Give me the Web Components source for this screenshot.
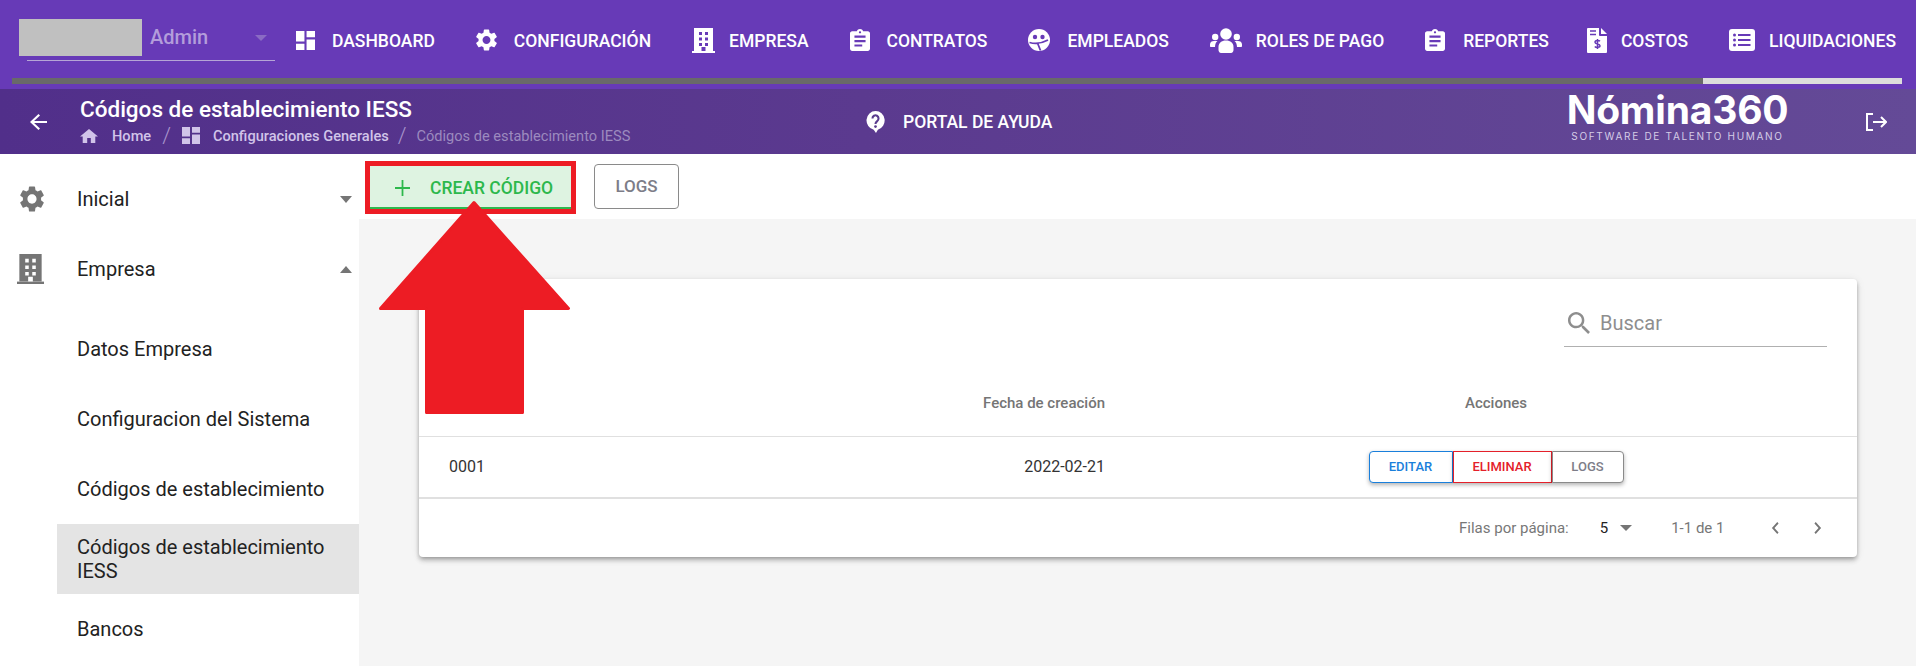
<!DOCTYPE html>
<html lang="es">
<head>
<meta charset="utf-8">
<title>Códigos de establecimiento IESS</title>
<style>
  html, body { margin: 0; height: 100%; overflow: hidden; background: #fff; font-family: Roboto, sans-serif; }
</style>
</head>
<body>
<app-shell></app-shell>
<script>
const PURPLE = '#673ab7';
const ICONS = {
  dashboard: ['3 3 18 18', '<path d="M3 13h8V3H3v10zm0 8h8v-6H3v6zm10 0h8V11h-8v10zm0-18v6h8V3h-8z"/>'],
  gear: ['2.5 2 19 20', '<path d="M19.14 12.94c.04-.3.06-.61.06-.94 0-.32-.02-.64-.07-.94l2.03-1.58c.18-.14.23-.41.12-.61l-1.92-3.32c-.12-.22-.37-.29-.59-.22l-2.39.96c-.5-.38-1.03-.7-1.62-.94l-.36-2.54c-.04-.24-.24-.41-.48-.41h-3.84c-.24 0-.43.17-.47.41l-.36 2.54c-.59.24-1.13.57-1.62.94l-2.39-.96c-.22-.08-.47 0-.59.22L2.74 8.87c-.12.21-.08.47.12.61l2.03 1.58c-.05.3-.09.63-.09.94s.02.64.07.94l-2.03 1.58c-.18.14-.23.41-.12.61l1.92 3.32c.12.22.37.29.59.22l2.39-.96c.5.38 1.03.7 1.62.94l.36 2.54c.05.24.24.41.48.41h3.84c.24 0 .44-.17.47-.41l.36-2.54c.59-.24 1.13-.56 1.62-.94l2.39.96c.22.08.47 0 .59-.22l1.92-3.32c.12-.22.07-.47-.12-.61l-2.01-1.58zM12 15.6c-1.98 0-3.6-1.62-3.6-3.6s1.62-3.6 3.6-3.6 3.6 1.62 3.6 3.6-1.62 3.6-3.6 3.6z"/>'],
  building: ['0 0 23 25', '<path fill-rule="evenodd" d="M2 0h19v23H13.500v-4h-4v4H2zM7 4v3h3V4zm6 0v3h3V4zM7 9.500v3h3v-3zm6 0v3h3v-3zM7 15v3h3v-3zm6 0v3h3v-3z"/><rect y="23" width="23" height="2"/>'],
  clipboard: ['3 1 18 20', '<path d="M19 3h-4.180C14.400 1.840 13.300 1 12 1s-2.400.84-2.820 2H5c-1.100 0-2 .9-2 2v14c0 1.100.9 2 2 2h14c1.100 0 2-.9 2-2V5c0-1.100-.9-2-2-2zm-7 0c.55 0 1 .45 1 1s-.45 1-1 1-1-.45-1-1 .45-1 1-1zm2 14H7v-2h7v2zm3-4H7v-2h10v2zm0-4H7V7h10v2z"/>'],
  face: ['0 0 22 22', `<circle cx="11" cy="11" r="11"/><circle cx="7" cy="8" r="2.200" fill="${PURPLE}"/><circle cx="14.500" cy="8" r="2.200" fill="${PURPLE}"/><path d="M1.500 13.500c5 1.500 12 1 18.500-2.500M9.500 14l3 7.500" fill="none" stroke="${PURPLE}" stroke-width="1.800"/>`],
  users: ['0 0 32 25', '<circle cx="16" cy="6" r="5.800"/><circle cx="5.200" cy="9" r="3.200"/><circle cx="26.800" cy="9" r="3.200"/><path d="M8.500 22v-3c0-4 3-6.500 7.500-6.500s7.500 2.500 7.500 6.500v3c0 1.500-1 3-2.500 3H11c-1.500 0-2.500-1.500-2.500-3z"/><path d="M0 18v-1.500C0 14 1.800 13 4 13h3.500c-1.500 1.200-2.400 3-2.500 6H1c-.6 0-1-.4-1-1zM32 18v-1.500C32 14 30.200 13 28 13h-3.500c1.500 1.200 2.400 3 2.500 6h4c.6 0 1-.4 1-1z"/>'],
  invoice: ['0 0 20 25', `<path d="M0 1a1 1 0 0 1 1-1h11v7a1 1 0 0 0 1 1h7v16a1 1 0 0 1-1 1H1a1 1 0 0 1-1-1z"/><path d="M14 0l6 6h-6z"/><path d="M3 3h6M3 6.500h6" stroke="${PURPLE}" stroke-width="1.600"/><path d="M13 13.200c-1-1-5-1.200-5 1 0 2.400 5 1.200 5 3.600 0 2-4 2-5.200.6M10.500 11v10" fill="none" stroke="${PURPLE}" stroke-width="1.500"/>`],
  list: ['0 0 26 22', `<rect width="26" height="22" rx="3"/><circle cx="5.500" cy="6" r="1.500" fill="${PURPLE}"/><circle cx="5.500" cy="11" r="1.500" fill="${PURPLE}"/><circle cx="5.500" cy="16" r="1.500" fill="${PURPLE}"/><path d="M9 6h12.500M9 11h12.500M9 16h12.500" stroke="${PURPLE}" stroke-width="2"/>`],
  help: ['0 0 20 22', '<path d="M10 0a9.500 9.500 0 0 1 2.500 18.700L10.500 22l-2.400-3.200A9.500 9.500 0 0 1 10 0z"/><path d="M6.800 7.500a3.200 3.200 0 1 1 4.900 2.700c-1.100.7-1.700 1.300-1.700 2.800" fill="none" stroke="#5a3c8e" stroke-width="2.200"/><circle cx="10" cy="15.600" r="1.400" fill="#5a3c8e"/>'],
  logout: ['0 0 22 18', '<path d="M8 1H2v16h6M8 9h13M16 4l5 5-5 5" fill="none" stroke="currentColor" stroke-width="2"/>'],
  back: ['4 4 16 16', '<path d="M20 11H7.830l5.590-5.590L12 4l-8 8 8 8 1.410-1.410L7.830 13H20v-2z"/>'],
  home: ['2 3 20 17', '<path d="M10 20v-6h4v6h5v-8h3L12 3 2 12h3v8z"/>'],
  search: ['3 3 17.500 17.500', '<path d="M15.500 14h-.79l-.28-.27C15.410 12.590 16 11.110 16 9.500 16 5.910 13.090 3 9.500 3S3 5.910 3 9.500 5.910 16 9.500 16c1.610 0 3.090-.59 4.230-1.570l.27.28v.79l5 4.990L20.490 19l-4.990-5zm-6 0C7.010 14 5 11.990 5 9.500S7.010 5 9.500 5 14 7.010 14 9.500 11.990 14 9.500 14z"/>'],
  down: ['0 0 12 6', '<path d="M0 0h12L6 6z"/>'],
  up: ['0 0 12 6', '<path d="M0 6h12L6 0z"/>'],
  left: ['7 5 10 14', '<path d="M15.410 7.410L14 6l-6 6 6 6 1.410-1.410L10.830 12z"/>'],
  right: ['7 5 10 14', '<path d="M10 6L8.590 7.410 13.170 12l-4.580 4.590L10 18l6-6z"/>'],
  plus: ['0 0 16 16', '<path d="M8 0v16M0 8h16" fill="none" stroke="currentColor" stroke-width="1.900"/>']
};

class UiIcon extends HTMLElement {
  connectedCallback() {
    const [box, body] = ICONS[this.getAttribute('name')];
    const w = this.getAttribute('w') || 20;
    const h = this.getAttribute('h') || w;
    this.attachShadow({ mode: 'open' });
    this.shadowRoot.innerHTML = `
      <style>
        :host { display: block; flex: none; line-height: 0; }
        svg { display: block; fill: currentColor; }
      </style>
      <svg width="${w}" height="${h}" viewBox="${box}" preserveAspectRatio="none">${body}</svg>
    `;
  }
}

class NavItem extends HTMLElement {
  constructor() {
    super();
    this.attachShadow({ mode: 'open' });
    this.shadowRoot.innerHTML = `
      <style>
        :host { display: flex; align-items: center; gap: var(--g, 15px); color: #fff; font: 500 17.500px/20px Roboto, sans-serif; white-space: nowrap; }
        slot:not([name]) { display: block; padding-top: 2px; }
      </style>
      <slot name="icon"></slot><slot></slot>
    `;
  }
}

class TopNav extends HTMLElement {
  constructor() {
    super();
    this.attachShadow({ mode: 'open' });
    this.shadowRoot.innerHTML = `
      <style>
        :host { display: block; height: 89px; background: ${PURPLE}; }
        .row { height: 78px; display: flex; align-items: center; box-sizing: border-box; padding: 2px 0 0 0; }
        .brand { width: 296px; flex: none; height: 78px; box-sizing: border-box; padding: 19px 0 0 19px; margin-top: -2px; }
        .pick { display: flex; width: 256px; height: 37px; align-items: center; }
        .blur { width: 123px; height: 37px; background: #c0c0c0; }
        .role { margin-left: 8px; margin-top: -2px; font: 500 20px Roboto, sans-serif; color: #b39ddb; width: 105px; }
        .caret { color: #8a6bc4; }
        .line { width: 248px; height: 1px; margin: 4px 0 0 8px; background: #b5a5d6; }
        .items { display: flex; gap: 41px; align-items: center; }
        .bar { display: grid; grid-template-columns: 1691px 199px; height: 6px; margin-left: 12px; }
        .bar i:first-child { background: #696969; }
        .bar i:last-child { background: #dcdcdc; }
      </style>
      <div class="row">
        <div class="brand">
          <div class="pick">
            <div class="blur"></div>
            <div class="role">Admin</div>
            <ui-icon class="caret" name="down" w="12" h="6"></ui-icon>
          </div>
          <div class="line"></div>
        </div>
        <div class="items">
          <nav-item style="--g:17px"><ui-icon slot="icon" name="dashboard" w="19" h="19"></ui-icon>DASHBOARD</nav-item>
          <nav-item style="--g:17px"><ui-icon slot="icon" name="gear" w="21" h="22"></ui-icon>CONFIGURACIÓN</nav-item>
          <nav-item style="--g:14px"><ui-icon slot="icon" name="building" w="23" h="25"></ui-icon>EMPRESA</nav-item>
          <nav-item style="--g:17px"><ui-icon slot="icon" name="clipboard" w="20" h="22"></ui-icon>CONTRATOS</nav-item>
          <nav-item style="--g:17px"><ui-icon slot="icon" name="face" w="22" h="22"></ui-icon>EMPLEADOS</nav-item>
          <nav-item style="--g:14px"><ui-icon slot="icon" name="users" w="32" h="25"></ui-icon>ROLES DE PAGO</nav-item>
          <nav-item style="--g:18px"><ui-icon slot="icon" name="clipboard" w="20" h="22"></ui-icon>REPORTES</nav-item>
          <nav-item style="--g:14px;margin-left:-3px"><ui-icon slot="icon" name="invoice" w="20" h="25"></ui-icon>COSTOS</nav-item>
          <nav-item style="--g:14px"><ui-icon slot="icon" name="list" w="26" h="22"></ui-icon>LIQUIDACIONES</nav-item>
        </div>
      </div>
      <div class="bar"><i></i><i></i></div>
    `;
  }
}

class SubBar extends HTMLElement {
  constructor() {
    super();
    this.attachShadow({ mode: 'open' });
    this.shadowRoot.innerHTML = `
      <style>
        :host { display: flex; align-items: center; height: 65px; color: #fff; background: linear-gradient(90deg, #512f8a 0%, #5b3a8f 45%, #644a97 100%); }
        .back { margin-left: 30px; }
        .head { margin-left: 33px; width: 786px; flex: none; padding-bottom: 3px; }
        h1 { margin: 0; font: 500 22.500px/26px Roboto, sans-serif; }
        .crumbs { display: flex; align-items: center; margin-top: 5px; font: 500 14.600px/18px Roboto, sans-serif; color: #d1c4e9; white-space: nowrap; }
        .crumbs .sep { font-weight: 300; font-size: 22px; margin: 0 11px; color: #a894cc; }
        .crumbs .sep.two { margin: 0 10px 0 9px; }
        .crumbs .cur { font-weight: 400; color: #9c8abf; }
        .crumbs ui-icon { margin-right: 14px; }
        .crumbs ui-icon.dash { margin-right: 13px; }
        .help { display: flex; align-items: center; gap: 18px; font: 500 17.500px/20px Roboto, sans-serif; }
        .logo { margin-left: auto; width: 223px; text-align: center; flex: none; align-self: flex-start; margin-top: 2px; }
        .logo b { display: block; font: 700 39px/38px Inter, sans-serif; letter-spacing: -.2px; }
        .logo span { display: block; font: 400 10px/12px Inter, sans-serif; letter-spacing: 1.700px; color: #d5cce6; white-space: nowrap; margin-top: 1px; }
        .out { margin: 0 29px 0 76px; }
      </style>
      <ui-icon class="back" name="back" w="17" h="16"></ui-icon>
      <div class="head">
        <h1>Códigos de establecimiento IESS</h1>
        <div class="crumbs">
          <ui-icon name="home" w="18" h="14"></ui-icon>Home<span class="sep">/</span>
          <ui-icon class="dash" name="dashboard" w="18" h="17"></ui-icon>Configuraciones Generales<span class="sep two">/</span>
          <span class="cur">Códigos de establecimiento IESS</span>
        </div>
      </div>
      <div class="help"><ui-icon name="help" w="19" h="22"></ui-icon>PORTAL DE AYUDA</div>
      <div class="logo"><b>Nómina360</b><span>SOFTWARE DE TALENTO HUMANO</span></div>
      <ui-icon class="out" name="logout" w="22" h="18"></ui-icon>
    `;
  }
}

class SideItem extends HTMLElement {
  constructor() {
    super();
    this.attachShadow({ mode: 'open' });
    this.shadowRoot.innerHTML = `
      <style>
        :host { display: flex; align-items: center; box-sizing: border-box; height: 70px; padding-left: 77px; position: relative; font: 400 20px/24px Roboto, sans-serif; color: #222; }
        :host([sub]) { margin-left: 57px; padding-left: 20px; padding-right: 30px; }
        :host([active]) { background: #e4e4e4; }
        .ic { position: absolute; left: 17px; top: 0; height: 100%; display: flex; align-items: center; width: 30px; justify-content: center; color: #757575; }
        .ar { position: absolute; left: 340px; top: 0; height: 100%; display: flex; align-items: center; color: #757575; }
      </style>
      <span class="ic"><slot name="icon"></slot></span>
      <slot></slot>
      <span class="ar"><slot name="arrow"></slot></span>
    `;
  }
}

class SideNav extends HTMLElement {
  constructor() {
    super();
    this.attachShadow({ mode: 'open' });
    this.shadowRoot.innerHTML = `
      <style>
        :host { display: block; width: 359px; flex: none; background: #fff; padding-top: 10px; box-sizing: border-box; overflow: hidden; }
        .subs { margin-top: 10px; }
      </style>
      <side-item><ui-icon slot="icon" name="gear" w="24" h="26"></ui-icon>Inicial<ui-icon slot="arrow" name="down" w="12" h="7"></ui-icon></side-item>
      <side-item><ui-icon slot="icon" name="building" style="margin-left:-4px" w="27" h="30"></ui-icon>Empresa<ui-icon slot="arrow" name="up" w="12" h="7"></ui-icon></side-item>
      <div class="subs">
        <side-item>Datos Empresa</side-item>
        <side-item>Configuracion del Sistema</side-item>
        <side-item>Códigos de establecimiento</side-item>
        <side-item sub active>Códigos de establecimiento IESS</side-item>
        <side-item>Bancos</side-item>
      </div>
    `;
  }
}

class DataCard extends HTMLElement {
  constructor() {
    super();
    this.attachShadow({ mode: 'open' });
    this.shadowRoot.innerHTML = `
      <style>
        :host { display: block; width: 1438px; height: 278px; background: #fff; border-radius: 4px; box-shadow: 0 2px 4px -1px rgba(0,0,0,.3), 0 4px 5px rgba(0,0,0,.14), 0 1px 10px rgba(0,0,0,.08); font-family: Roboto, sans-serif; overflow: hidden; }
        .search { display: flex; justify-content: flex-end; padding: 0 30px; height: 68px; }
        .box { width: 263px; height: 68px; box-sizing: border-box; border-bottom: 1px solid #b0b0b0; display: flex; align-items: center; gap: 10px; padding: 21px 0 0 4px; font-size: 20px; color: #8e8e8e; }
        .row { display: grid; grid-template-columns: 656px 722px; column-gap: 30px; padding-left: 30px; align-items: center; }
        .head { height: 90px; padding-top: 22px; box-sizing: border-box; border-bottom: 1px solid #e0e0e0; font: 500 15px/16px Roboto, sans-serif; color: #757575; }
        .body { height: 60px; border-bottom: 2px solid #e0e0e0; font-size: 16px; color: #333; }
        .fecha { text-align: right; }
        .cod { display: flex; justify-content: space-between; margin-top: -1px; }
        .act { text-align: center; }
        .group { display: flex; justify-content: center; }
        .group span { box-sizing: border-box; height: 32px; font: 500 13px/30px Roboto, sans-serif; text-align: center; border: 1px solid; box-shadow: 0 2px 4px rgba(0,0,0,.3); background: #fff; }
        .ed { width: 84px; color: #1a7fdb; border-color: #1a7fdb !important; border-radius: 4px 0 0 4px; }
        .el { width: 99px; color: #e4202a; border-color: #e4202a !important; }
        .lg { width: 72px; color: #7d7d88; border-color: #8a8a8a !important; border-radius: 0 4px 4px 0; }
        .foot { display: flex; align-items: center; height: 58px; font-size: 15px; color: #777; padding-left: 1040px; }
        .num { margin-left: 31px; color: #222; font-size: 15px; }
        .car { margin-left: 12px; color: #757575; }
        .rng { margin-left: 39px; font-size: 15px; }
        .prev { margin-left: 47px; color: #757575; }
        .next { margin-left: 33px; color: #757575; }
      </style>
      <div class="search"><div class="box"><ui-icon name="search" w="22" h="22"></ui-icon>Buscar</div></div>
      <div class="row head"><div class="fecha">Fecha de creación</div><div class="act">Acciones</div></div>
      <div class="row body">
        <div class="cod"><span>0001</span><span>2022-02-21</span></div>
        <div class="group"><span class="ed">EDITAR</span><span class="el">ELIMINAR</span><span class="lg">LOGS</span></div>
      </div>
      <div class="foot">
        <span>Filas por página:</span><span class="num">5</span>
        <ui-icon class="car" name="down" w="12" h="6"></ui-icon>
        <span class="rng">1-1 de 1</span>
        <ui-icon class="prev" name="left" w="9" h="14"></ui-icon>
        <ui-icon class="next" name="right" w="9" h="14"></ui-icon>
      </div>
    `;
  }
}

class PageMain extends HTMLElement {
  constructor() {
    super();
    this.attachShadow({ mode: 'open' });
    this.shadowRoot.innerHTML = `
      <style>
        :host { display: block; flex: 1; min-width: 0; position: relative; background: #f5f5f5; }
        .tools { height: 65px; background: #fff; display: flex; align-items: flex-start; }
        .make { margin: 7px 0 0 6px; box-sizing: border-box; width: 211px; height: 53px; border: 5px solid #ed1c24; background: #def3e1; color: #2db84c; display: flex; align-items: center; font: 500 17.500px/20px Roboto, sans-serif; padding-left: 25px; box-shadow: inset 0 -2px 0 #2db84c; white-space: nowrap; }
        .make ui-icon { margin-right: 20px; }
        .logs { margin: 10px 0 0 18px; box-sizing: border-box; width: 85px; height: 45px; border: 1px solid #8a8a8a; border-radius: 4px; font: 500 17px/43px Roboto, sans-serif; color: #7d7d88; text-align: center; background: #fff; }
        data-card { margin: 60px 0 0 60px; }
        .arrow { position: absolute; left: 18px; top: 45px; color: #ed1c24; }
      </style>
      <div class="tools">
        <div class="make"><ui-icon name="plus" w="15" h="16"></ui-icon>CREAR CÓDIGO</div>
        <div class="logs">LOGS</div>
      </div>
      <data-card></data-card>
      <svg class="arrow" width="197" height="217" viewBox="0 0 197 217"><path d="M97 3.500L191.500 109.500H145.500V213.500H49.500V109.500H3.500z" fill="#ed1c24" stroke="#ed1c24" stroke-width="3" stroke-linejoin="round"/></svg>
    `;
  }
}

class AppShell extends HTMLElement {
  constructor() {
    super();
    this.attachShadow({ mode: 'open' });
    this.shadowRoot.innerHTML = `
      <style>
        :host { display: flex; flex-direction: column; height: 666px; overflow: hidden; }
        .body { display: flex; flex: 1; min-height: 0; }
      </style>
      <top-nav></top-nav>
      <sub-bar></sub-bar>
      <div class="body"><side-nav></side-nav><page-main></page-main></div>
    `;
  }
}

customElements.define('ui-icon', UiIcon);
customElements.define('nav-item', NavItem);
customElements.define('top-nav', TopNav);
customElements.define('sub-bar', SubBar);
customElements.define('side-item', SideItem);
customElements.define('side-nav', SideNav);
customElements.define('data-card', DataCard);
customElements.define('page-main', PageMain);
customElements.define('app-shell', AppShell);
</script>
</body>
</html>
